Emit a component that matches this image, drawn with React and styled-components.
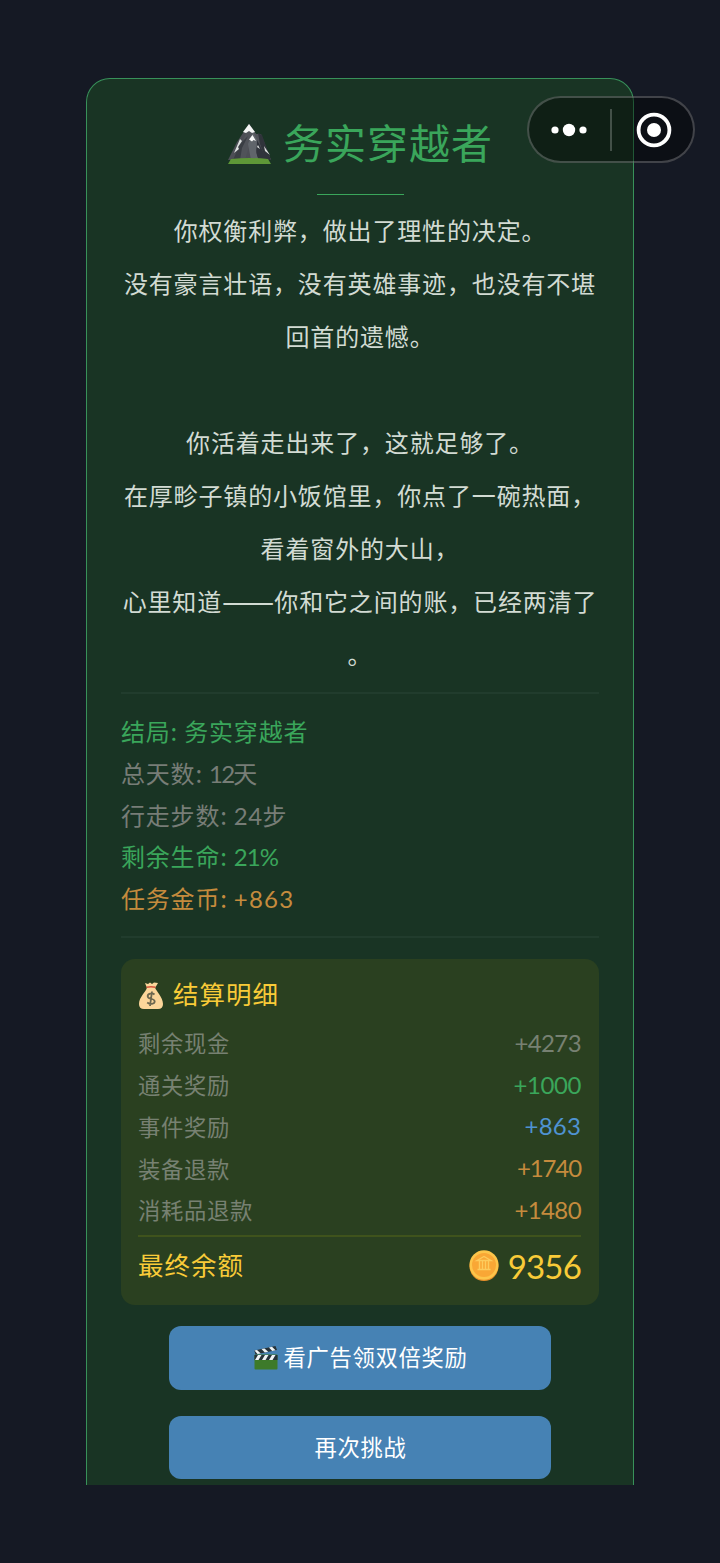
import React from 'react'
import styled, { createGlobalStyle } from 'styled-components'

const colors = {
  page: '#151924',
  panel: '#193424',
  green: '#3aa65b',
  gray: '#777d77',
  dim: '#778172',
  orange: '#c58b3d',
  blue: '#4f93d2',
  gold: '#f9cb38',
}

const story = [
  '你权衡利弊，做出了理性的决定。',
  '没有豪言壮语，没有英雄事迹，也没有不堪',
  '回首的遗憾。',
  '',
  '你活着走出来了，这就足够了。',
  '在厚畛子镇的小饭馆里，你点了一碗热面，',
  '看着窗外的大山，',
  <>心里知道<b>——</b>你和它之间的账，已经两清了</>,
  '。',
]

const stats = [
  { label: '结局', value: '务实穿越者', spacing: 0.8, color: colors.green },
  { label: '总天数', value: '12', unit: '天', spacing: -1.8, color: colors.gray },
  { label: '行走步数', value: '24', unit: '步', spacing: 0.4, color: colors.gray },
  { label: '剩余生命', value: '21%', spacing: -1, color: colors.green },
  { label: '任务金币', value: '+863', spacing: 1.2, color: colors.orange },
]

const bill = [
  { label: '剩余现金', value: '+4273', spacing: -0.6, color: colors.dim },
  { label: '通关奖励', value: '+1000', spacing: -0.4, color: colors.green },
  { label: '事件奖励', value: '+863', spacing: 0.2, color: colors.blue },
  { label: '装备退款', value: '+1740', spacing: -1.1, color: colors.orange },
  { label: '消耗品退款', value: '+1480', spacing: -0.6, color: colors.orange },
]

const MountainIcon = () => (
  <svg width="43" height="40" viewBox="0 0 43 40" aria-hidden="true">
    <path d="M21 0 L28 10 L33 10 L43 36 H0 L9 18 Z" fill="#4c4e55" />
    <path d="M21 0 L28 10 L33 11 L43 36 H31 L24 13 L17 36 H8 Z" fill="#505359" />
    <path d="M30 9 L34 11 L43 36 H38 L32 20 Z" fill="#30343b" />
    <path d="M25 8 L29 16 L28 28 L31 36 H23 L20 20 Z" fill="#60656b" />
    <path d="M20 12 L14 24 L12 36 H5 L12 20 Z" fill="#3a3e44" />
    <path d="M29 22 Q27 29 31 36 H39 Q34 25 29 16 Z" fill="#30343c" />
    <path d="M21 0 L27 8 L24 9 L21 7 L18 9 L15 8 Z" fill="#f4f6f5" />
    <path d="M24.5 11 L28 17 L25.5 16 L24 17.500 L21 15.500 Z" fill="#f4f6f5" />
    <path d="M12 15 L14 17 L10 23 L11 25 L6 29 Z M30 21 L32 25 L29 23 Z M36 22 L42 31 L37 27 Z" fill="#dce0df" />
    <path d="M3 35 Q21 33 40 35 L43 40 H0 Z" fill="#5e9737" />
  </svg>
)

const MoneyBagIcon = () => (
  <svg width="26" height="28" viewBox="0 0 26 28" aria-hidden="true">
    <path d="M7 1 L10 2 L12 0.500 L14 2 L16 0.500 L20 1 L17 6 H9 Z" fill="#fbd79b" />
    <path d="M9 5.500 H17 C18 9 25 15 25 22 Q25 27 20 27 H6 Q1 27 1 22 C1 15 8 10 9 5.500 Z" fill="#fcd69a" />
    <path d="M8.500 5.300 Q13 4 17.500 5.300" stroke="#d5553b" strokeWidth="1.500" fill="none" />
    <path
      d="M16.500 12.500 C14 10.500 9.500 11.500 9.700 14.300 C10 17.500 16.800 16 16.700 19.500 C16.500 22.300 12 22.600 9.200 20.500 M14 9.500 L12 24"
      stroke="#6e684f"
      strokeWidth="1.800"
      fill="none"
    />
  </svg>
)

const CoinIcon = () => (
  <svg width="30" height="32" viewBox="0 0 30 32" aria-hidden="true">
    <ellipse cx="15" cy="16.200" rx="14.500" ry="14.800" fill="#e8902a" />
    <ellipse cx="15" cy="15" rx="14.500" ry="14.700" fill="#fdc54a" />
    <circle cx="15" cy="15" r="12" fill="#f9a735" />
    <path d="M8 10.500 L15 6.500 L22 10.500 Z M8.500 19.500 H21.500 M10.500 11 V19 M13.500 11 V19 M16.500 11 V19 M19.500 11 V19" fill="none" stroke="#fdcb5c" strokeWidth="1.400" />
  </svg>
)

const ClapperIcon = () => (
  <svg width="24" height="24" viewBox="0 0 24 24" aria-hidden="true">
    <rect x="0.500" y="8.500" width="23" height="15" rx="1" fill="#3d7a2a" />
    <rect x="0.500" y="9" width="23" height="5" fill="#263238" />
    <path d="M0.300 4.500 L21.500 0 L23 4 L1.500 8.500 Z" fill="#263238" />
    <path d="M0.500 4.600 L3 4 L6.800 7.400 L3.500 8 Z M7.500 3 L10.500 2.400 L14.200 5.800 L10.800 6.500 Z M15 1.500 L18 0.800 L21.500 4.300 L18.200 4.900 Z" fill="#eef3f5" />
    <path d="M4 9 H7.500 L4.500 14 H1 Z M11 9 H14.500 L11.500 14 H8 Z M18 9 H21.500 L18.500 14 H15 Z" fill="#eef3f5" />
  </svg>
)

const App = () => {
  return (
    <>
      <GlobalStyle />
      <Page>
        <Panel>
          <Title>
            <MountainIcon />
            <h1>务实穿越者</h1>
          </Title>
          <TitleLine />
          <Story>
            {story.map((line, index) => (
              <p key={index}>{line}</p>
            ))}
          </Story>
          <Stats>
            {stats.map((item) => (
              <Stat key={item.label} $color={item.color}>
                {item.label}: <Figure $spacing={item.spacing}>{item.value}</Figure>
                {item.unit}
              </Stat>
            ))}
          </Stats>
          <Bill>
            <BillTitle>
              <MoneyBagIcon />
              <h2>结算明细</h2>
            </BillTitle>
            {bill.map((item) => (
              <BillRow key={item.label} $color={item.color}>
                <span>{item.label}</span>
                <Figure $spacing={item.spacing}>{item.value}</Figure>
              </BillRow>
            ))}
            <Total>
              <span className="label">最终余额</span>
              <div className="amount">
                <CoinIcon />
                <Figure $spacing={-0.8}>9356</Figure>
              </div>
            </Total>
          </Bill>
          <Actions>
            <Button>
              <ClapperIcon />
              <span>看广告领双倍奖励</span>
            </Button>
            <Button>
              <span>再次挑战</span>
            </Button>
          </Actions>
        </Panel>
        <Capsule>
          <button className="more" aria-label="更多">
            <svg width="36" height="14" viewBox="0 0 36 14">
              <circle cx="4" cy="7" r="3.600" fill="#fff" />
              <circle cx="18" cy="7" r="6.200" fill="#fff" />
              <circle cx="32" cy="7" r="3.600" fill="#fff" />
            </svg>
          </button>
          <i />
          <button className="close" aria-label="关闭">
            <svg width="36" height="36" viewBox="0 0 36 36">
              <circle cx="18" cy="18" r="15.400" fill="none" stroke="#fff" strokeWidth="3.800" />
              <circle cx="18" cy="18" r="7" fill="#fff" />
            </svg>
          </button>
        </Capsule>
      </Page>
    </>
  )
}

const GlobalStyle = createGlobalStyle`
  * {
    box-sizing: border-box;
    margin: 0;
    padding: 0;
  }
  body {
    background-color: ${colors.page};
    font-family: "Noto Sans CJK SC", sans-serif;
    text-spacing-trim: space-all;
  }
  h1, h2 {
    font-weight: 400;
  }
  svg {
    display: block;
    flex-shrink: 0;
  }
`

const Page = styled.main`
  position: relative;
  height: 1563px;
  padding: 78px 86px;
  overflow: hidden;
`

const Panel = styled.section`
  display: flex;
  flex-direction: column;
  height: 1407px;
  padding: 35px 34px 0;
  overflow: hidden;
  background-color: ${colors.panel};
  border: 1px solid #38915a;
  border-bottom: none;
  border-radius: 24px 24px 0 0;
`

const Title = styled.header`
  display: flex;
  align-items: center;
  justify-content: center;
  gap: 12px;
  height: 60px;
  padding-left: 1px;
  h1 {
    margin-bottom: 7px;
    font-size: 41px;
    line-height: 60px;
    letter-spacing: 1px;
    color: ${colors.green};
  }
`

const TitleLine = styled.div`
  flex-shrink: 0;
  width: 87px;
  height: 1px;
  margin: 20px auto 8px;
  background-color: ${colors.green};
`

const Story = styled.div`
  padding-bottom: 12px;
  border-bottom: 2px solid #213c2d;
  p {
    height: 53px;
    font-size: 24px;
    line-height: 53px;
    letter-spacing: 0.85px;
    text-align: center;
    white-space: nowrap;
    color: #d2dbd3;
  }
  b {
    font-size: 31.2px;
    font-weight: 400;
    line-height: 0;
    letter-spacing: 0;
    vertical-align: -2px;
  }
`

const Stats = styled.div`
  padding: 16px 0 17.4px;
  border-bottom: 2px solid #213c2d;
`

const Figure = styled.span`
  font-family: Lato, "Noto Sans CJK SC", sans-serif;
  letter-spacing: ${({ $spacing }) => $spacing}px;
`

const Stat = styled.p`
  height: 41.8px;
  font-size: 24px;
  line-height: 41.8px;
  letter-spacing: 0.8px;
  color: ${({ $color }) => $color};
`

const Bill = styled.div`
  height: 346px;
  margin-top: 21px;
  padding: 11px 18px 0 17px;
  background-color: #2a4020;
  border-radius: 14px;
`

const BillTitle = styled.div`
  display: flex;
  align-items: center;
  gap: 9px;
  height: 51px;
  color: ${colors.gold};
  h2 {
    margin-bottom: 6px;
    font-size: 25.5px;
    letter-spacing: 1px;
  }
`

const BillRow = styled.div`
  display: flex;
  align-items: center;
  justify-content: space-between;
  height: 41.8px;
  font-size: 22.3px;
  letter-spacing: 0.7px;
  color: ${colors.dim};
  ${Figure} {
    font-size: 24px;
    color: ${({ $color }) => $color};
  }
`

const Total = styled.div`
  display: flex;
  align-items: center;
  justify-content: space-between;
  height: 60px;
  margin-top: 5px;
  border-top: 2px solid #3f531c;
  color: ${colors.gold};
  .label {
    margin-bottom: 6px;
    font-size: 25.5px;
    letter-spacing: 1px;
  }
  .amount {
    display: flex;
    align-items: center;
    gap: 9px;
    font-size: 33px;
  }
`

const Actions = styled.div`
  display: flex;
  flex-direction: column;
  align-items: center;
  gap: 26px;
  margin-top: 21px;
`

const Button = styled.button`
  display: flex;
  align-items: center;
  justify-content: center;
  gap: 6px;
  width: 382px;
  height: 63.5px;
  padding-left: 1px;
  font-family: inherit;
  font-size: 22.3px;
  letter-spacing: 0.7px;
  color: #fff;
  background-color: #4682b4;
  border: none;
  border-radius: 12px;
  span {
    margin-bottom: 4px;
  }
`

/* floats over the panel's top right corner */
const Capsule = styled.div`
  position: absolute;
  top: 96px;
  right: 25px;
  display: flex;
  align-items: center;
  width: 168px;
  height: 67px;
  background-color: rgba(0, 0, 0, 0.4);
  border: 2px solid rgba(255, 255, 255, 0.22);
  border-radius: 34px;
  button {
    display: flex;
    align-items: center;
    justify-content: center;
    background: none;
    border: none;
  }
  .more {
    width: 81px;
    padding-right: 2px;
  }
  .close {
    width: 81px;
    padding-left: 2px;
  }
  i {
    width: 2px;
    height: 42px;
    background-color: rgba(255, 255, 255, 0.22);
  }
`

export default App
